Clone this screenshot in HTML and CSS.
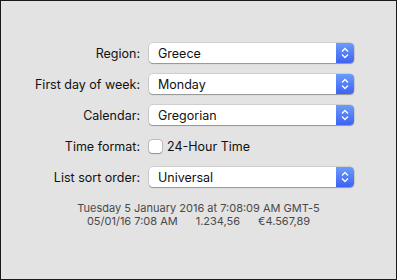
FILE: index.html
```html
<!DOCTYPE html>
<html>
<head>
<meta charset="utf-8">
<link rel="stylesheet" href="styles.css">
</head>
<body>
<div class="window">
  <div class="form">
    <div class="label">Region:</div>
    <div class="popup"><span class="value">Greece</span><span class="stepper"><svg width="18" height="20" viewBox="0 0 18 20"><path d="M6 8.5 L9 5.5 L12 8.5 M6 11.5 L9 14.5 L12 11.5" fill="none" stroke="#fff" stroke-width="1.3"/></svg></span></div>

    <div class="label">First day of week:</div>
    <div class="popup"><span class="value">Monday</span><span class="stepper"><svg width="18" height="20" viewBox="0 0 18 20"><path d="M6 8.5 L9 5.5 L12 8.5 M6 11.5 L9 14.5 L12 11.5" fill="none" stroke="#fff" stroke-width="1.3"/></svg></span></div>

    <div class="label">Calendar:</div>
    <div class="popup"><span class="value">Gregorian</span><span class="stepper"><svg width="18" height="20" viewBox="0 0 18 20"><path d="M6 8.5 L9 5.5 L12 8.5 M6 11.5 L9 14.5 L12 11.5" fill="none" stroke="#fff" stroke-width="1.3"/></svg></span></div>

    <div class="label">Time format:</div>
    <div class="check"><span class="box"></span><span>24-Hour Time</span></div>

    <div class="label">List sort order:</div>
    <div class="popup"><span class="value">Universal</span><span class="stepper"><svg width="18" height="20" viewBox="0 0 18 20"><path d="M6 8.5 L9 5.5 L12 8.5 M6 11.5 L9 14.5 L12 11.5" fill="none" stroke="#fff" stroke-width="1.3"/></svg></span></div>
  </div>
  <div class="sample">
    <div class="line">Tuesday 5 January 2016 at 7:08:09 AM GMT-5</div>
    <div class="line groups"><span>05/01/16 7:08 AM</span><span>1.234,56</span><span>€4.567,89</span></div>
  </div>
</div>
</body>
</html>
```

FILE: styles.css
```css
html, body {
  margin: 0;
  padding: 0;
}
body {
  font-family: Inter, "Liberation Sans", Arial, sans-serif;
  color: #000;
}
.window {
  box-sizing: border-box;
  width: 397px;
  height: 280px;
  background: #e3e3e3;
  border: 1px solid #1a1a1a;
  padding-top: 42px;
}
.form {
  display: grid;
  grid-template-columns: 139px 205px;
  grid-auto-rows: 20px;
  column-gap: 9px;
  row-gap: 11px;
  font-size: 12.5px;
}
.label {
  display: flex;
  align-items: center;
  justify-content: flex-end;
  color: #111;
}
.popup {
  box-sizing: border-box;
  display: flex;
  align-items: stretch;
  background: #fff;
  border-radius: 4px;
  box-shadow: 0 0 0 0.5px rgba(0,0,0,0.18), 0 1px 1px rgba(0,0,0,0.28);
  overflow: hidden;
}
.value {
  flex: 1;
  display: flex;
  align-items: center;
  padding-left: 9px;
  color: #111;
}
.stepper {
  width: 18px;
  background: linear-gradient(#6b9cfa, #3d62f5);
  display: flex;
}
.check {
  display: flex;
  align-items: center;
  gap: 5px;
  color: #111;
}
.box {
  box-sizing: border-box;
  width: 13px;
  height: 13px;
  background: #fff;
  border-radius: 3px;
  box-shadow: 0 0 0 0.5px rgba(0,0,0,0.3), 0 0.5px 1px rgba(0,0,0,0.25);
}
.sample {
  margin-top: 15px;
  font-size: 11px;
  line-height: 13px;
  color: #4a4a4a;
  text-align: center;
}
.groups {
  display: flex;
  justify-content: center;
  gap: 18px;
}
```
